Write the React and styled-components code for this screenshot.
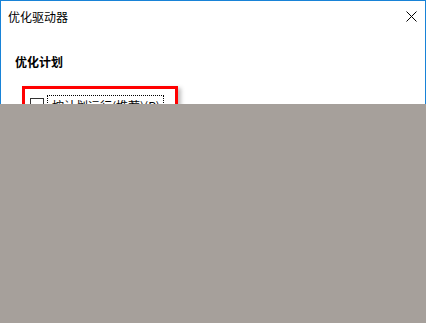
import React from "react";
import styled, { createGlobalStyle } from "styled-components";

const Global = createGlobalStyle`
  html, body { margin: 0; padding: 0; background: #a6a09b; }
  body { width: 426px; height: 323px; overflow: hidden; font-family: "Noto Sans CJK SC", "Noto Sans", sans-serif; }
`;

const Page = styled.div`
  width: 426px;
  height: 323px;
  display: flex;
  flex-direction: column;
`;

const Window = styled.div`
  height: 104px;
  flex: none;
  box-sizing: border-box;
  background: #ffffff;
  border: 1px solid #1883d7;
  border-bottom: none;
  overflow: hidden;
  display: flex;
  flex-direction: column;
`;

const TitleBar = styled.div`
  height: 31px;
  display: flex;
  align-items: center;
  justify-content: space-between;
  padding-left: 7px;
  flex: none;
`;

const Title = styled.span`
  font-size: 12px;
  color: #000;
  line-height: 16px;
`;

const CloseBtn = styled.div`
  width: 46px;
  height: 30px;
  display: flex;
  align-items: center;
  justify-content: center;
  margin-right: -9px;
`;

const Body = styled.div`
  padding: 22px 0 0 14px;
  display: flex;
  flex-direction: column;
  align-items: flex-start;
`;

const Heading = styled.div`
  font-size: 12px;
  font-weight: 700;
  line-height: 16px;
  color: #000;
`;

const Highlight = styled.div`
  margin-top: 16px;
  margin-left: 7px;
  border: 3px solid #ff0000;
  box-shadow: 3px 2px 4px rgba(0, 0, 0, 0.25);
  padding: 6px 11px 8px 5px;
  display: flex;
  align-items: flex-start;
`;

const CheckRow = styled.label`
  display: flex;
  align-items: flex-start;
  gap: 3px;
`;

const Box = styled.span`
  width: 12px;
  height: 12px;
  border: 1px solid #333;
  background: #fff;
  flex: none;
  margin-top: 3px;
`;

const Focus = styled.span`
  border: 1px dotted #000;
  padding: 1px 3px 0 4px;
  font-size: 12px;
  line-height: 17px;
  color: #000;
`;

const Shade = styled.div`
  flex: 1;
  background: #a6a09b;
`;

export default function App() {
  return (
    <Page>
      <Global />
      <Window>
        <TitleBar>
          <Title>优化驱动器</Title>
          <CloseBtn>
            <svg width="11" height="11" viewBox="0 0 11 11">
              <path d="M0.5 0.5L10.5 10.5M10.5 0.5L0.5 10.5" stroke="#000" strokeWidth="1" fill="none" />
            </svg>
          </CloseBtn>
        </TitleBar>
        <Body>
          <Heading>优化计划</Heading>
          <Highlight>
            <CheckRow>
              <Box />
              <Focus>按计划运行(推荐)(<u>R</u>)</Focus>
            </CheckRow>
          </Highlight>
        </Body>
      </Window>
      <Shade />
    </Page>
  );
}
